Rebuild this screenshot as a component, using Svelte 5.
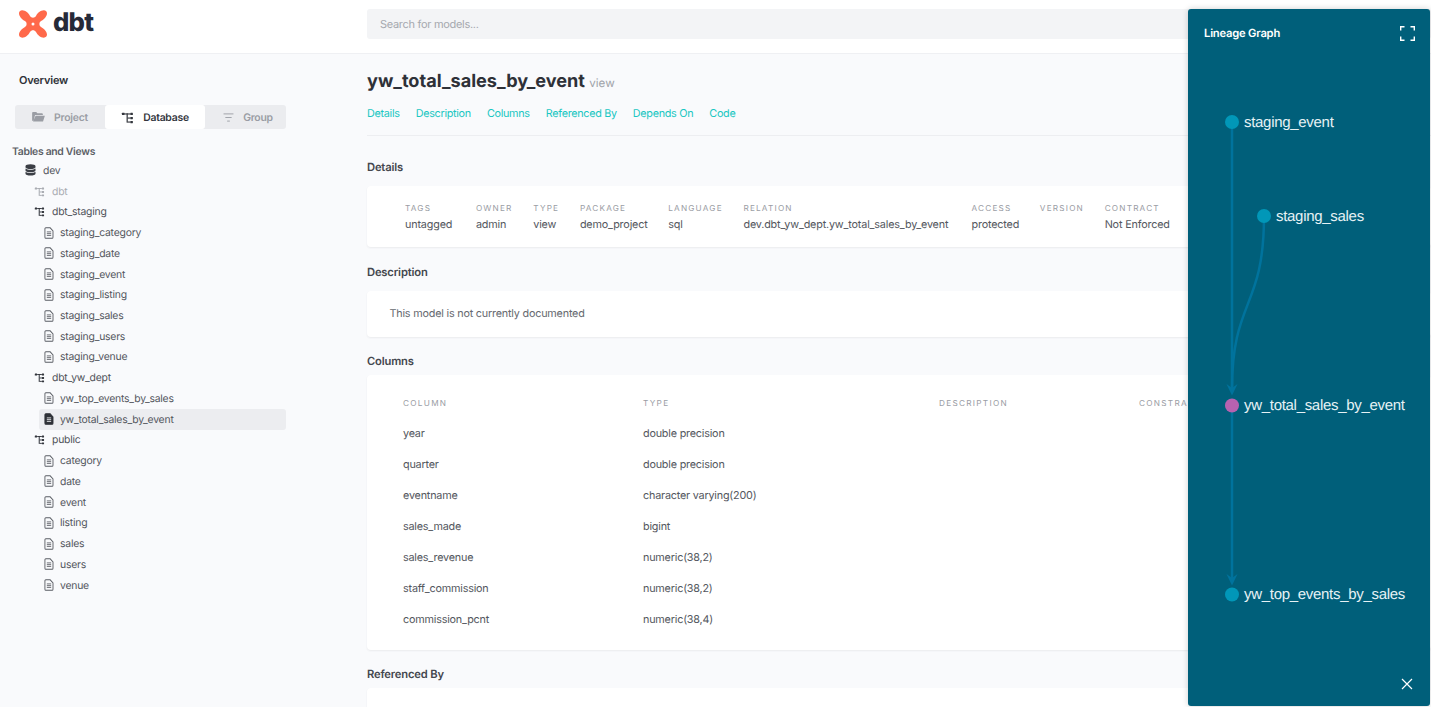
<script>
  const schemas = [
    { name: 'dbt', muted: true, items: [] },
    { name: 'dbt_staging', items: ['staging_category','staging_date','staging_event','staging_listing','staging_sales','staging_users','staging_venue'] },
    { name: 'dbt_yw_dept', items: ['yw_top_events_by_sales','yw_total_sales_by_event'] },
    { name: 'public', items: ['category','date','event','listing','sales','users','venue'] }
  ];
  const tabs = ['Details','Description','Columns','Referenced By','Depends On','Code'];
  const details = [
    ['TAGS','untagged'],['OWNER','admin'],['TYPE','view'],['PACKAGE','demo_project'],['LANGUAGE','sql'],
    ['RELATION','dev.dbt_yw_dept.yw_total_sales_by_event'],['ACCESS','protected'],['VERSION',''],['CONTRACT','Not Enforced']
  ];
  const columns = [
    ['year','double precision'],['quarter','double precision'],['eventname','character varying(200)'],
    ['sales_made','bigint'],['sales_revenue','numeric(38,2)'],['staff_commission','numeric(38,2)'],['commission_pcnt','numeric(38,4)']
  ];
  const nodes = [
    { x: 44, y: 113, label: 'staging_event' },
    { x: 76, y: 207, label: 'staging_sales' },
    { x: 44, y: 396.5, label: 'yw_total_sales_by_event', active: true },
    { x: 44, y: 585.5, label: 'yw_top_events_by_sales' }
  ];
</script>

{#snippet schemaIcon(size = 14)}
  <svg class="ico" width={size} height={size} viewBox="0 0 14 14" fill="currentColor">
    <rect x="1" y="2" width="3" height="2.4" rx=".4"/>
    <rect x="6" y="2.5" width="1.3" height="10"/>
    <rect x="4" y="2.6" width="6" height="1.2"/>
    <rect x="7" y="7" width="3" height="1.2"/>
    <rect x="7" y="11.3" width="3" height="1.2"/>
    <rect x="10" y="2" width="2.8" height="2.4" rx=".4"/>
    <rect x="10" y="6.4" width="2.8" height="2.4" rx=".4"/>
    <rect x="10" y="10.7" width="2.8" height="2.4" rx=".4"/>
  </svg>
{/snippet}

{#snippet docIcon(filled)}
  <svg class="ico" width="10" height="12" viewBox="0 0 12 13" preserveAspectRatio="none">
    <path d="M2.2 .9h5.2l3.4 3.3v6.9a1.1 1.1 0 0 1-1.1 1.1H2.2a1.1 1.1 0 0 1-1.1-1.1V2a1.1 1.1 0 0 1 1.1-1.1z" fill={filled ? 'currentColor' : 'none'} stroke="currentColor" stroke-width="1.1"/>
    <path d="M3.4 5.300h5.200M3.400 7.200h5.200M3.400 9.100h5.200" stroke={filled ? '#ecedf0' : 'currentColor'} stroke-width="1"/>
  </svg>
{/snippet}

<div class="page">
  <header>
    <div class="logo">
      <svg width="28" height="28" viewBox="0 0 28 28">
        <path fill="#ff694a" d="M3.200 .3C6.500 .4 9.500 3 11 6C12.500 8.200 15.500 8.200 17 6C18.500 3 21.500 .4 24.800 .3C26.800 .3 28 1.600 28 3.400C27.800 6.500 25 9.500 22 11C19.800 12.500 19.800 15.500 22 17C25 18.500 27.800 21.500 28 24.600C28 26.400 26.800 27.700 24.800 27.700C21.500 27.600 18.500 25 17 22C15.500 19.800 12.500 19.800 11 22C9.500 25 6.500 27.600 3.200 27.700C1.200 27.700 0 26.400 0 24.600C.2 21.500 3 18.500 6 17C8.200 15.500 8.200 12.500 6 11C3 9.500 .2 6.500 0 3.400C0 1.600 1.200 .3 3.200 .3Z"/>
        <circle cx="14" cy="14" r="1.500" fill="#fff"/>
      </svg>
      <span>dbt</span>
    </div>
    <div class="search">Search for models...</div>
  </header>

  <div class="body">
    <aside>
      <h3 class="overview">Overview</h3>
      <div class="switch">
        <div class="sw">
          <svg width="13" height="10" viewBox="0 0 14 11" fill="currentColor"><path d="M0 1.200C0 .6.500 0 1.200 0h3.300l1.300 1.400h5c.6 0 1 .4 1 1v.8H3.200L1.700 9 0 9.800zM3.800 4.200H14l-2 6.300H1z"/></svg>
          <span>Project</span>
        </div>
        <div class="sw on">{@render schemaIcon(13)}<span>Database</span></div>
        <div class="sw">
          <svg width="11" height="9" viewBox="0 0 12 10" stroke="currentColor" stroke-width="1" fill="none"><path d="M.5 1h11M2.500 5h7M4.500 9h3"/></svg>
          <span>Group</span>
        </div>
      </div>
      <h4 class="tv">Tables and Views</h4>
      <ul class="tree">
        <li class="row lvl0">
          <svg class="ico" width="11" height="12" viewBox="0 0 11 12" fill="#3b3e45">
            <path d="M.5 2.200C.5 1 2.700.3 5.500.3s5 .7 5 1.900v1c0 1.100-2.200 1.900-5 1.900s-5-.8-5-1.900zM.5 4.500c1 .9 3 1.300 5 1.300s4-.4 5-1.300v1.900c0 1.100-2.200 1.900-5 1.900s-5-.8-5-1.900zM.5 7.700c1 .9 3 1.300 5 1.300s4-.4 5-1.300v2c0 1.100-2.200 1.900-5 1.900s-5-.8-5-1.900z"/>
          </svg>
          <span>dev</span>
        </li>
        {#each schemas as s}
          <li class="row lvl1" class:muted={s.muted}>{@render schemaIcon(11)}<span>{s.name}</span></li>
          {#each s.items as it}
            {@const sel = it === 'yw_total_sales_by_event'}
            <li class="row lvl2" class:sel>{@render docIcon(sel)}<span>{it}</span></li>
          {/each}
        {/each}
      </ul>
    </aside>

    <main>
      <h1>yw_total_sales_by_event <small>view</small></h1>
      <nav>{#each tabs as t}<span>{t}</span>{/each}</nav>
      <h2 class="first">Details</h2>
      <section class="card details">
        {#each details as [k, v]}
          <div class="d"><div class="k">{k}</div><div class="v">{v}</div></div>
        {/each}
      </section>
      <h2>Description</h2>
      <section class="card desc">This model is not currently documented</section>
      <h2 class="tight">Columns</h2>
      <section class="card cols">
        <div class="cgrid head"><span>COLUMN</span><span>TYPE</span><span>DESCRIPTION</span><span>CONSTRAINTS</span></div>
        {#each columns as [n, t]}
          <div class="cgrid crow"><span>{n}</span><span>{t}</span></div>
        {/each}
      </section>
      <h2 class="tight">Referenced By</h2>
      <section class="card last"></section>
    </main>
  </div>

  <div class="panel">
    <div class="ptitle">Lineage Graph</div>
    <svg class="expand" width="15" height="15" viewBox="0 0 15 15" fill="none" stroke="#fff" stroke-width="1.400">
      <path d="M.7 4.500V.7h3.800M10.500.7h3.800v3.800M14.300 10.500v3.800h-3.800M4.500 14.300H.7v-3.800"/>
    </svg>
    <svg class="graph" width="242" height="697" viewBox="0 0 242 697">
      <g fill="none" stroke="#00739d" stroke-width="2.500">
        <path d="M44 113V380"/>
        <path d="M76 207C76 300 44 290 44 380"/>
        <path d="M44 396V570"/>
      </g>
      <path d="M38.500 375l5.500 4 5.500-4-5.500 11.500z" fill="#00739d"/>
      <path d="M38.500 565l5.500 4 5.500-4-5.500 11.500z" fill="#00739d"/>
      {#each nodes as n}
        <circle cx={n.x} cy={n.y} r="7" fill={n.active ? '#b762b0' : '#0197b8'}/>
        <text x={n.x + 12} y={n.y + 4.500}>{n.label}</text>
      {/each}
    </svg>
    <svg class="close" width="12" height="12" viewBox="0 0 12 12" stroke="#fff" stroke-width="1.200"><path d="M1 1l10 10M11 1L1 11"/></svg>
  </div>
</div>

<style>
  :global(body) { margin: 0; background: #f9fafc; }
  .page { position: relative; width: 1431px; height: 707px; overflow: hidden; font-family: Inter, "Liberation Sans", sans-serif; color: #4a4d55; background: #f9fafc; text-rendering: geometricPrecision; }
  header { height: 53px; background: #fff; border-bottom: 1px solid #eff0f3; display: flex; align-items: center; }
  .logo { width: 367px; padding-left: 19px; box-sizing: border-box; display: flex; align-items: center; gap: 6px; margin-top: -6px; }
  .logo span { font: 800 25.700px/1 Inter, sans-serif; color: #262a38; letter-spacing: -.8px; margin-top: -1px; }
  .search { flex: 1; height: 30px; line-height: 30px; padding-left: 13px; background: #f3f4f6; border-radius: 3px; font-size: 11px; letter-spacing: -.3px; color: #a5a8ae; margin-top: -5px; }
  .body { display: flex; height: 653px; }
  aside { width: 367px; flex: none; padding: 19px 0 0 12px; box-sizing: border-box; }
  .overview { margin: 0 0 0 7px; font-size: 11px; letter-spacing: -.2px; line-height: 14px; font-weight: 600; color: #2e3138; }
  .switch { display: flex; width: 271px; height: 24px; margin: 18px 0 0 3px; background: #ebecef; border-radius: 3px; }
  .sw { display: flex; align-items: center; justify-content: center; gap: 9px; font-size: 10.400px; letter-spacing: -.25px; font-weight: 600; color: #9a9da4; }
  .sw:nth-child(1) { width: 90px; }
  .sw.on { width: 100px; background: #fff; color: #33363d; border-radius: 3px; }
  .sw:nth-child(3) { width: 81px; box-sizing: border-box; padding-left: 5px; }
  .tv { margin: 16px 0 0; font-size: 10.400px; letter-spacing: -.3px; line-height: 13px; font-weight: 600; color: #5c5f66; }
  .tree { list-style: none; margin: 2px 0 0; padding: 0; width: 274px; }
  .row { height: 20.740px; display: flex; align-items: center; font-size: 10.400px; letter-spacing: -.22px; color: #54575e; white-space: nowrap; }
  .lvl0 { padding-left: 13px; gap: 7px; }
  .lvl1 { padding-left: 22px; gap: 7px; color: #4f5259; }
  .lvl1 .ico { color: #33363d; }
  .lvl1.muted, .lvl1.muted .ico { color: #a9acb2; }
  .lvl2 { margin-left: 27px; padding-left: 5px; gap: 6px; border-radius: 3px; }
  .lvl2 .ico { color: #5a5d64; }
  .lvl2.sel { background: #ecedf0; }
  .lvl2.sel .ico { color: #2f3238; }
  main { flex: 1; min-width: 0; padding-top: 15px; }
  h1 { margin: 0; font-size: 18.100px; line-height: 24px; font-weight: 700; color: #2e3138; }
  h1 small { font-size: 11.600px; font-weight: 400; color: #a0a3a9; margin-left: 0; }
  nav { display: flex; gap: 16px; margin-top: 12px; padding-bottom: 14px; border-bottom: 1px solid #edeef1; font-size: 10.800px; letter-spacing: -.29px; line-height: 14px; color: #19c7c2; }
  h2 { margin: 18px 0 0; font-size: 11.200px; letter-spacing: -.16px; line-height: 14px; font-weight: 600; color: #44474e; }
  h2.first { margin-top: 24px; }
  h2.tight { margin-top: 17px; }
  .card { background: #fff; border-radius: 4px; box-shadow: 0 1px 2px rgba(40, 44, 60, .07); margin-top: 12px; }
  .details { height: 61px; padding: 17px 0 0 38px; box-sizing: border-box; display: flex; gap: 20.700px; white-space: nowrap; }
  .d:first-child { margin-right: 3px; }
  .d:nth-child(6) { margin-right: 2.500px; }
  .k { font-size: 8.200px; line-height: 11px; letter-spacing: 1.200px; color: #9a9da4; }
  .v { font-size: 10.800px; letter-spacing: -.17px; line-height: 14px; margin-top: 4px; color: #54575e; }
  .desc { height: 46px; line-height: 46px; padding-left: 22.500px; font-size: 10.800px; letter-spacing: -.2px; color: #66696f; }
  .cols { height: 275px; padding-top: 23px; box-sizing: border-box; margin-top: 7px; }
  .cgrid { display: grid; grid-template-columns: 240px 296px 200px 200px; padding-left: 36px; white-space: nowrap; }
  .head { font-size: 8.200px; line-height: 11px; letter-spacing: 1.300px; color: #9a9da4; margin-bottom: 9px; }
  .crow { height: 31px; line-height: 31px; font-size: 10.800px; letter-spacing: -.2px; color: #54575e; }
  .last { height: 40px; margin-top: 7px; }
  .panel { position: absolute; left: 1188px; top: 9px; width: 242px; height: 697px; background: #005f7a; border-radius: 3px; box-shadow: 0 0 6px rgba(0, 0, 0, .18); }
  .ptitle { position: absolute; left: 16px; top: 16.500px; font-size: 11.200px; letter-spacing: -.2px; line-height: 14px; font-weight: 600; color: #fff; }
  .expand { position: absolute; left: 212px; top: 16.500px; }
  .close { position: absolute; left: 213px; top: 669px; }
  .graph { position: absolute; left: 0; top: 0; }
  .graph text { font-family: "Liberation Sans", sans-serif; font-size: 15px; letter-spacing: -.3px; fill: #e6f2f5; }
</style>
